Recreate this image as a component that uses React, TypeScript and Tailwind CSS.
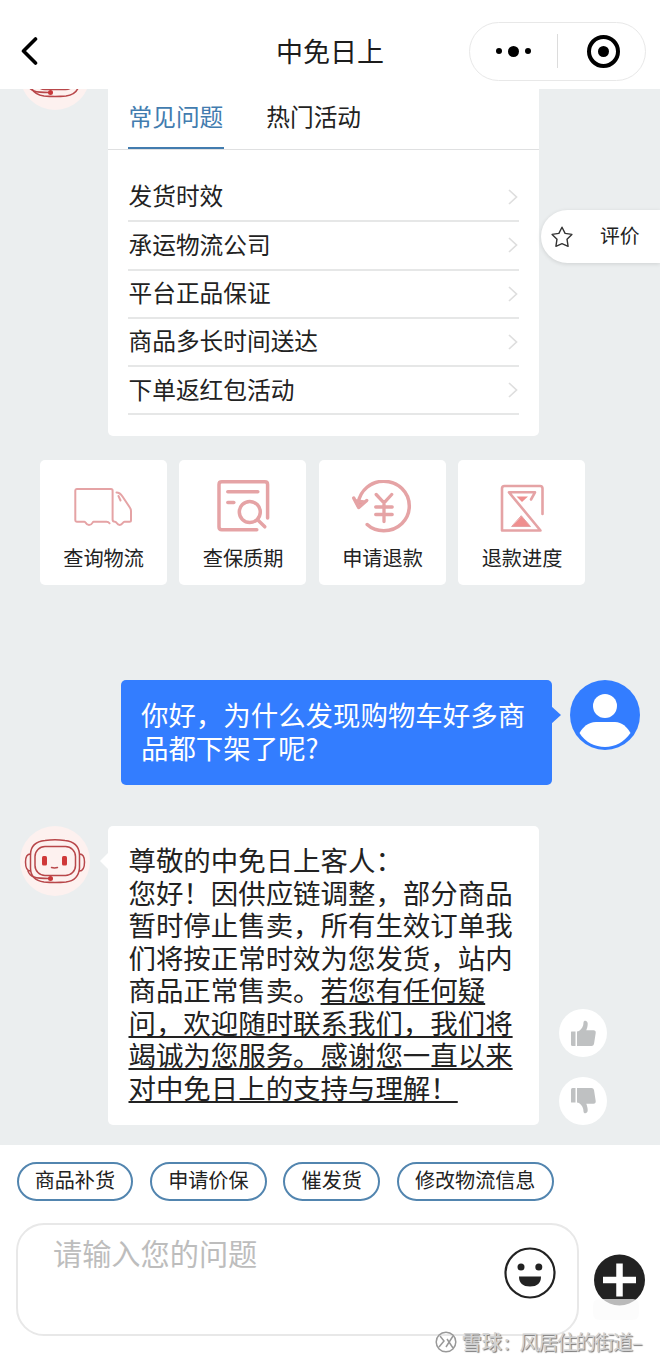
import { useState } from "react";
import type { ReactNode } from "react";

const questions = ["发货时效", "承运物流公司", "平台正品保证", "商品多长时间送达", "下单返红包活动"];
const tabs = ["常见问题", "热门活动"];
const chips = ["商品补货", "申请价保", "催发货", "修改物流信息"];

const replyLines: { plain?: string; marked?: string }[] = [
  { plain: "尊敬的中免日上客人：" },
  { plain: "您好！因供应链调整，部分商品" },
  { plain: "暂时停止售卖，所有生效订单我" },
  { plain: "们将按正常时效为您发货，站内" },
  { plain: "商品正常售卖。", marked: "若您有任何疑" },
  { marked: "问，欢迎随时联系我们，我们将" },
  { marked: "竭诚为您服务。感谢您一直以来" },
  { marked: "对中免日上的支持与理解！" },
];

const pink = "#e5a3a5";

const TruckIcon = () => (
  <svg className="block h-[60px] w-[64px]" viewBox="0 0 64 60" fill="none" stroke={pink} strokeWidth="2" strokeLinecap="round" strokeLinejoin="round">
    <path d="M38.500 43.300C37.500 41.800 36.800 41.700 35.500 41.700H22.500C21.500 41.700 21.500 45 18 45S15 41.700 13.500 41.700H5.700C4.800 41.700 4.300 41.200 4.300 40.300V10.500C4.300 9.600 4.800 9 5.700 9H40C41 9 41.600 9.600 41.600 10.500V39.500C41.600 41 42.300 41.700 44 41.700C46 41.700 45.500 45 48.700 45S51.500 41.700 53.500 41.700H58.500C59.600 41.700 60 41.200 60 40.200V31C60 29 59.500 28.500 58.500 27L51.500 16.500C50 14.200 48.500 12.500 45.500 12.500" />
    <path d="M47.500 16L49.500 20.500" />
  </svg>
);

const DocSearchIcon = () => (
  <svg className="block h-[60px] w-[64px]" viewBox="-1.300 0 64 60" fill="none" stroke={pink} strokeWidth="3.500" strokeLinecap="round" strokeLinejoin="round">
    <path d="M44.500 49.700H9.500C7.500 49.700 6.700 49 6.700 47V4.500C6.700 2.500 7.500 1.800 9.500 1.800H52.500C54.500 1.800 55.300 2.500 55.300 4.500V38" />
    <path d="M15.500 11.700H45.500" />
    <path d="M15.500 22.500H21.500" />
    <circle cx="37.500" cy="32" r="10.500" />
    <path d="M45.300 39.700L52.500 46.800" />
  </svg>
);

const RefundIcon = () => (
  <svg className="block h-[60px] w-[64px]" viewBox="-0.700 0 64 60" fill="none" stroke={pink} strokeWidth="3.500" strokeLinecap="round" strokeLinejoin="round">
    <path d="M7.500 23C9.500 10 20.500 1.300 33 1.300C47.500 1.300 58.600 12.500 58.600 26S47.500 50.700 33 50.700C26.500 50.700 20.500 48.300 16.500 44.500" />
    <path d="M3 18L8 27.500L16 20.500" />
    <path d="M5.500 21L8 26.500L13 22Z" fill="#ef8f8f" />
    <path d="M25.500 14.500L33.300 22.800L41 14.500M33.300 23V41.500M25 27H41.500M25 34.500H41.500" strokeWidth="3.300" />
  </svg>
);

const HourglassIcon = () => (
  <svg className="block h-[60px] w-[64px]" viewBox="-2 0.500 64 60" fill="none" stroke={pink} strokeWidth="2.600" strokeLinecap="round" strokeLinejoin="round">
    <path d="M50.500 34.500V9C50.500 7.300 49.500 6.500 48 6.500H12.500C10.800 6.500 10 7.300 10 9V51H48.500L17 12.800H43L39 20" />
    <path d="M24.500 17H36L30 22.500Z" fill="#ef8f8f" stroke="none" />
    <path d="M29.500 36.500L38.500 47H20Z" fill="#ef8f8f" strokeWidth="1" />
  </svg>
);

const services: { label: string; icon: ReactNode }[] = [
  { label: "查询物流", icon: <TruckIcon /> },
  { label: "查保质期", icon: <DocSearchIcon /> },
  { label: "申请退款", icon: <RefundIcon /> },
  { label: "退款进度", icon: <HourglassIcon /> },
];

const RobotAvatar = () => (
  <svg className="block size-[70px] shrink-0" viewBox="0 0 70 70" fill="none" stroke="#b8474a" strokeWidth="1.500" strokeLinecap="round">
    <circle cx="35" cy="35" r="35" fill="#fdf1ef" stroke="none" />
    <path d="M25 14.500Q35 13 45 14.500Q58.500 16 59.500 28V42Q58.500 54.500 46 56Q35 57 24 56Q10.500 54 10.500 42V28Q11 16 25 14.500Z" />
    <rect x="15" y="20.500" width="40.500" height="29" rx="10" />
    <path d="M10.500 28C6.500 28 5.500 31 5.500 36S7 45 10.500 45M59.500 28C63.500 28 64.500 31 64.500 36S63 45 59.500 45" />
    <path d="M8 45C10 51 15 52.500 29 52.500" />
    <circle cx="30.500" cy="52.500" r="2.500" fill="#c8383a" stroke="none" />
    <rect x="22" y="30" width="5" height="9.500" rx="1.500" fill="#cf3838" stroke="none" />
    <rect x="42" y="30" width="5" height="9.500" rx="1.500" fill="#cf3838" stroke="none" />
    <path d="M31.500 41.500Q34.500 42.300 37.500 41.500" />
  </svg>
);

const UserAvatar = () => (
  <svg className="block size-[70px] shrink-0" viewBox="0 0 70 70">
    <circle cx="35" cy="35" r="35" fill="#337dff" />
    <circle cx="35" cy="26" r="12" fill="#fff" />
    <path d="M9.500 53C13 47 18 42 26 42H45C52 42 57 47 60.500 53C54 62 45 67 35 67S15 62 9.500 53Z" fill="#fff" />
  </svg>
);

const Thumb = ({ down }: { down?: boolean }) => (
  <button className="flex size-12 items-center justify-center rounded-full bg-white">
    <svg className={down ? "block size-[26px] -scale-y-100" : "block size-[26px]"} viewBox="0 0 26 26" fill="#bfc1c2">
      <path d="M1.500 11.500H5.500V26H2.500Q1 26 1 24.500V12Q1 11.500 1.500 11.500Z" />
      <path d="M7 11.500L9 11C12 9 13.500 6 13.500 2.500C13.500 0 17.500 0 17.700 3.500C17.800 6 17 8.500 16.300 10.300H23.500Q26 10.500 25.700 13L24 24Q23.500 26 21.500 26H7Z" />
    </svg>
  </button>
);

export default function App() {
  const [activeTab, setActiveTab] = useState(0);

  return (
    <div className="flex h-[1362px] w-[660px] flex-col overflow-hidden bg-white font-['Noto_Sans_CJK_SC','Liberation_Sans',sans-serif] text-[#222]">
      {/* Header */}
      <header className="flex h-[89px] shrink-0 items-center pt-[13px] pr-[14px] pl-5">
        <div className="flex-1">
          <svg className="block h-7 w-5" viewBox="0 0 20 28" fill="none" stroke="#000" strokeWidth="3.600" strokeLinecap="round" strokeLinejoin="round">
            <path d="M15.500 2L3.500 14L15.500 26" />
          </svg>
        </div>
        <h1 className="mr-[85px] text-[27px] leading-[38px] text-[#1c1c1c]">中免日上</h1>
        <div className="flex h-[59px] w-[177px] items-center rounded-full border border-[#e8e8e8]">
          <div className="flex w-[87px] items-center justify-center gap-[6px]">
            <span className="size-[6px] rounded-full bg-black" />
            <span className="size-[11px] rounded-full bg-black" />
            <span className="size-[6px] rounded-full bg-black" />
          </div>
          <span className="h-[34px] w-px bg-[#dcdcdc]" />
          <div className="flex flex-1 justify-center pl-[4px]">
            <span className="flex size-[33px] items-center justify-center rounded-full border-4 border-black">
              <span className="size-[11px] rounded-full bg-black" />
            </span>
          </div>
        </div>
      </header>

      {/* Conversation */}
      <main className="relative h-[1056px] shrink-0 overflow-hidden bg-[#ebeeef]">
        <div className="flex h-[347px] items-start">
          <div className="-mt-[49px] ml-5 w-[88px]"><RobotAvatar /></div>
          <section className="h-full w-[431px] rounded-b-[5px] bg-white">
            <div className="flex h-[61px] gap-[42px] border-b border-[#dfe0e1] pl-5">
              {tabs.map((tab, i) => (
                <button
                  key={tab}
                  onClick={() => setActiveTab(i)}
                  className={`h-[60px] border-b-2 px-[0.500px] pb-[3px] text-[23.700px] leading-[55px] ${
                    i === activeTab ? "border-[#427caf] text-[#427caf]" : "border-transparent"
                  }`}
                >
                  {tab}
                </button>
              ))}
            </div>
            <ul className="px-5 pt-[24px]">
              {questions.map((q) => (
                <li key={q} className="flex h-[48.300px] items-center justify-between border-b-2 border-[#e6e7e7] text-[23.700px]">
                  <span className="-mt-[2px] pl-[0.500px]">{q}</span>
                  <svg className="mr-[1px] block h-4 w-[10px]" viewBox="0 0 10 16" fill="none" stroke="#dedede" strokeWidth="1.700">
                    <path d="M1 1L8.500 8L1 15" />
                  </svg>
                </li>
              ))}
            </ul>
          </section>
        </div>

        <div className="mt-6 ml-10 flex gap-[12.800px]">
          {services.map((s) => (
            <button key={s.label} className="flex h-[125px] w-[126.700px] flex-col items-center rounded-[5px] bg-white pt-5">
              {s.icon}
              <span className="mt-[3px] pl-[0.500px] text-[20.200px] leading-[30px]">{s.label}</span>
            </button>
          ))}
        </div>

        {/* Customer message */}
        <div className="mt-[95px] mr-5 flex items-start justify-end gap-[18px]">
          <div className="relative h-[105px] w-[431px] rounded-[5px] bg-[#337dff] pt-[18px] pl-5 text-[27.450px] leading-[32.600px] whitespace-nowrap text-white">
            <p>你好，为什么发现购物车好多商</p>
            <p>品都下架了呢?</p>
            <svg className="absolute top-[26px] -right-[9px] block h-[18px] w-[10px]" viewBox="0 0 10 18">
              <path d="M0 0L10 9L0 18Z" fill="#337dff" />
            </svg>
          </div>
          <UserAvatar />
        </div>

        {/* Service reply */}
        <div className="mt-[41px] ml-5 flex">
          <RobotAvatar />
          <div className="relative ml-[18px] h-[299px] w-[431px] rounded-[5px] bg-white pt-[17px] pl-[20.500px] text-[27.450px] leading-[32.550px] whitespace-nowrap">
            <svg className="absolute top-[26px] -left-[8px] block h-[18px] w-[9px]" viewBox="0 0 9 18">
              <path d="M9 0L0 9L9 18Z" fill="#fff" />
            </svg>
            {replyLines.map((line, i) => (
              <p key={i}>
                {line.plain}
                {line.marked && <span className="underline decoration-2 underline-offset-[2px] [text-decoration-skip-ink:none]">{line.marked}</span>}
              </p>
            ))}
          </div>
          <div className="ml-5 flex flex-col gap-5 self-end">
            <Thumb />
            <Thumb down />
          </div>
        </div>

        {/* Floating rating entry */}
        <button className="absolute top-[121px] right-0 flex h-[53px] w-[119px] items-center rounded-l-full bg-white pl-[10px] shadow-[0_1px_4px_rgba(0,0,0,0.12)]">
          <svg className="block size-[22px]" viewBox="0 0 22 22" fill="none" stroke="#333" strokeWidth="1.400" strokeLinejoin="round">
            <path d="M11 1.200L14.100 7.400L20.900 8.400L16 13.200L17.100 20.300L11 17.700L4.900 20.300L6 13.200L1.100 8.400L7.900 7.400Z" />
          </svg>
          <span className="ml-[27px] pb-[4px] text-[19.800px] leading-[30px]">评价</span>
        </button>
      </main>

      {/* Composer */}
      <footer className="relative h-[217px] shrink-0 bg-white pt-[17px] pl-4">
        <div className="flex gap-[16.700px] pl-[0.500px]">
          {chips.map((chip) => (
            <button key={chip} className="h-[39px] rounded-full border-2 border-[#5285af] px-[16.200px] pb-[4px] text-[20.100px] leading-[31px]">
              {chip}
            </button>
          ))}
        </div>
        <div className="mt-[22px] flex">
          <div className="flex h-[113px] w-[563px] justify-between rounded-[28px] border-2 border-[#e8e8e8] pr-[21px] pl-[35px]">
            <span className="pt-[6px] text-[29.200px] leading-[42px] text-[#bdbdbd]">请输入您的问题</span>
            <svg className="mt-[22px] block size-[52px]" viewBox="0 0 52 52">
              <circle cx="26" cy="26" r="24.500" fill="none" stroke="#222" strokeWidth="2.200" />
              <circle cx="17" cy="20" r="3.500" fill="#222" />
              <circle cx="34.800" cy="20" r="3.500" fill="#222" />
              <path d="M15 29.500H37Q37 39.500 26 39.500T15 29.500Z" fill="#222" />
            </svg>
          </div>
          <svg className="mt-[30px] ml-[13px] block h-[70px] w-[54px]" viewBox="0 0 54 70">
            <circle cx="27.500" cy="27" r="25.500" fill="#222" />
            <path d="M27.500 10.500V43.500M11 27H44" stroke="#fff" strokeWidth="6.500" />
            <rect x="1" y="46" width="46" height="21" rx="6" fill="#fbfbfb" fillOpacity="0.700" />
          </svg>
        </div>

        {/* Watermark */}
        <div className="absolute right-[19px] bottom-[5px] flex items-center gap-[5px] text-[20.200px] leading-[30px] whitespace-nowrap text-[#d2d2d2] [text-shadow:1px_1px_1px_#777]">
          <svg className="block size-[22px]" viewBox="0 0 22 22" fill="none" stroke="#999" strokeWidth="1.500">
            <circle cx="11" cy="11" r="9.800" />
            <path d="M5 5L9 10L4 16M18 5L11 16M12 8L18 17" />
          </svg>
          <span className="flex">
            <span className="font-medium">雪球</span>
            <span className="ml-[2px]">:</span>
            <span className="ml-[10px] tracking-[-1.500px]">风居住的街道–</span>
          </span>
        </div>
      </footer>
    </div>
  );
}
